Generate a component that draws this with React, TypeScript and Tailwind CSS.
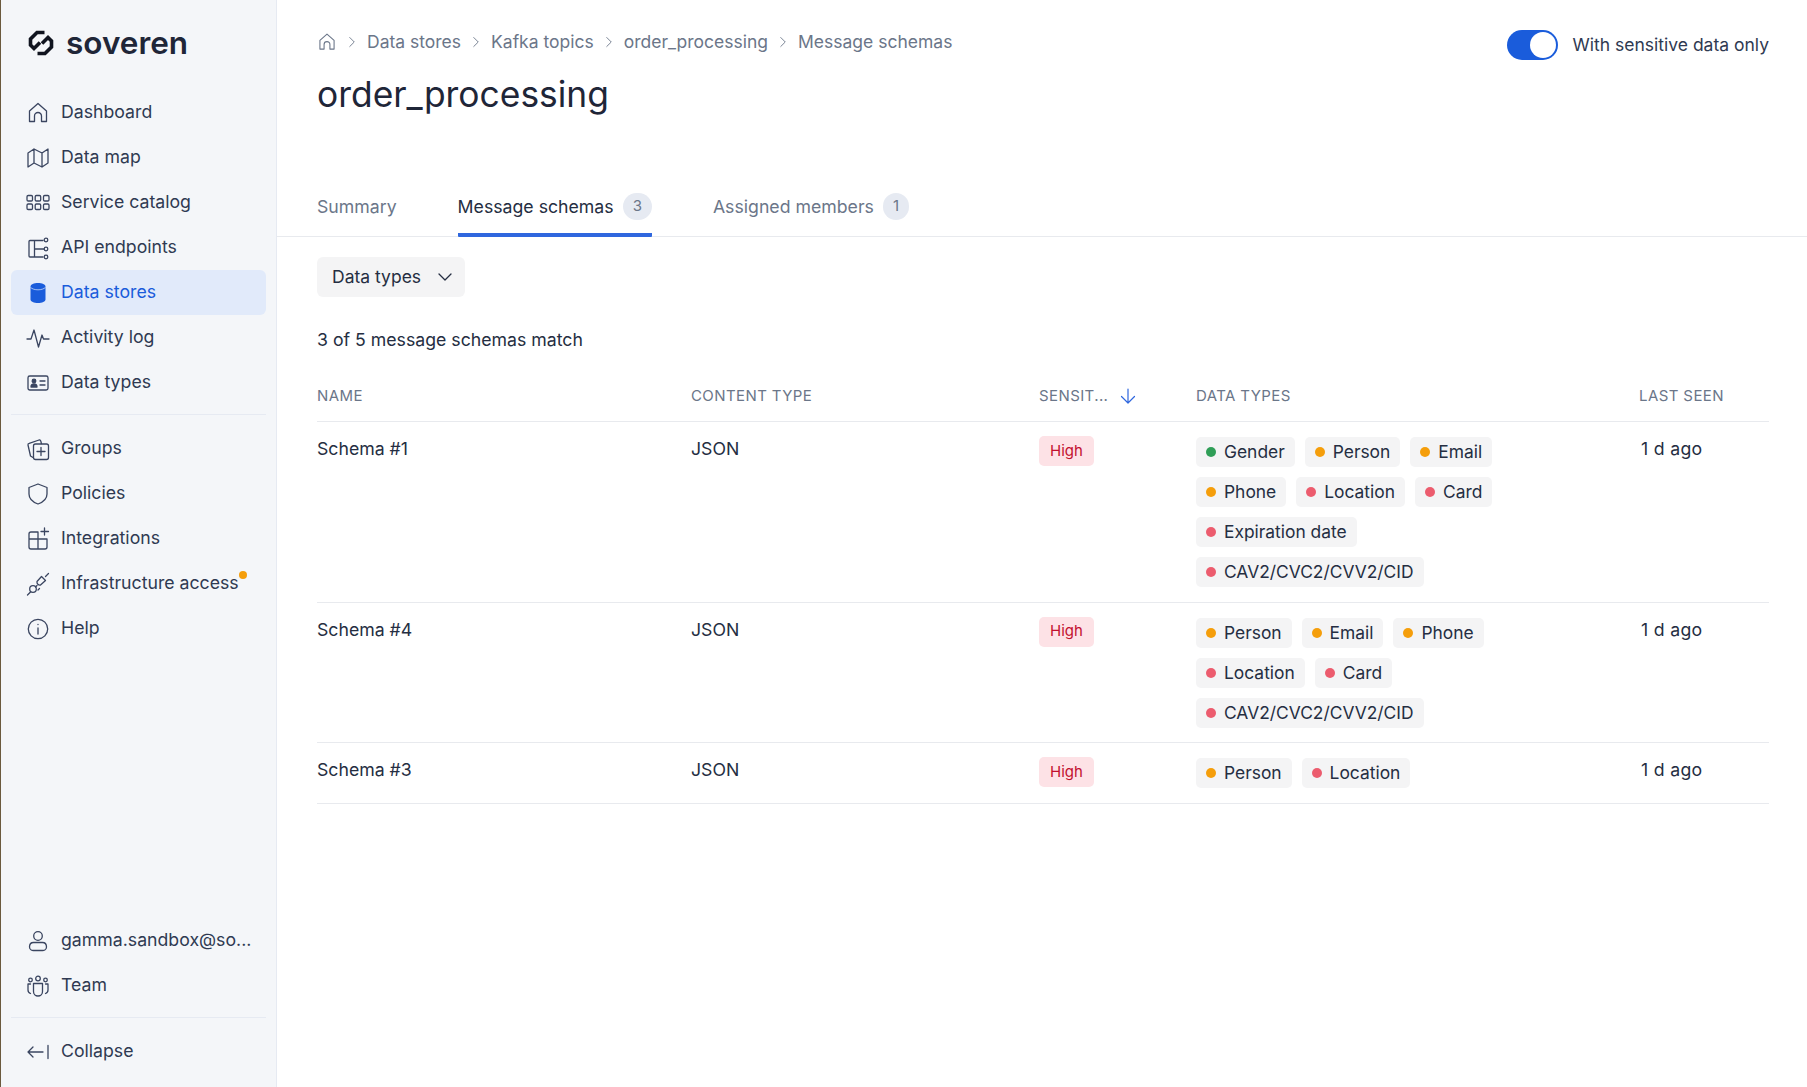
import { ChevronDown, ChevronRight } from 'lucide-react';
import type { ReactNode } from 'react';

const stroke = { fill: 'none', stroke: 'currentColor', strokeWidth: 1.3, strokeLinecap: 'round', strokeLinejoin: 'round' } as const;

function Icon({ children }: { children: ReactNode }) {
  return (
    <svg width="24" height="24" viewBox="0 0 24 24" {...stroke} className="shrink-0">
      {children}
    </svg>
  );
}

const icons: Record<string, ReactNode> = {
  home: <path d="M3.500 20.500V10L12 2.500l8.500 7.500v10.500h-5V15a3.500 3.500 0 0 0-7 0v5.500z" />,
  map: <path d="M2 21V7l6-4 8 4 6-4v14l-6 4-8-4zM8 3v14M16 7v14" />,
  catalog: (
    <>
      <rect x="1" y="4.500" width="5.500" height="5.500" rx="1.200" />
      <rect x="9.200" y="4.500" width="5.500" height="5.500" rx="1.200" />
      <rect x="17.500" y="4.500" width="5.500" height="5.500" rx="1.200" />
      <rect x="1" y="13" width="5.500" height="5.500" rx="1.200" />
      <rect x="9.200" y="13" width="5.500" height="5.500" rx="1.200" />
      <rect x="17.500" y="13" width="5.500" height="5.500" rx="1.200" />
    </>
  ),
  api: (
    <>
      <path d="M17 4.500H4a1 1 0 0 0-1 1V20a1 1 0 0 0 1 1h13M8.500 4.500V21M8.500 13H18" />
      <circle cx="20" cy="4" r="1.800" />
      <circle cx="20" cy="13" r="1.800" />
      <circle cx="20" cy="21" r="1.800" />
    </>
  ),
  activity: <path d="M1 13h4l3-9 4.500 17 3.500-12 1.500 4H23" />,
  types: (
    <>
      <rect x="2" y="5" width="20" height="14" rx="1.800" />
      <circle cx="8" cy="10" r="1.800" fill="currentColor" />
      <path d="M5 16c0-4 6-4 6 0z" fill="currentColor" />
      <path d="M14 10h5M14 14h5" />
    </>
  ),
  groups: (
    <>
      <path d="M7 20.500 4.500 19 2 8a1.500 1.500 0 0 1 1.200-1.700L13 3a1.500 1.500 0 0 1 1.800 1.100l.6 2.400" />
      <rect x="7.500" y="7" width="15" height="15.500" rx="2" />
      <path d="M15 10.500v8M11 14.500h8" />
    </>
  ),
  shield: <path d="M12 2 21 5.500V12c0 5-3.500 8-9 10C6.500 20 3 17 3 12V5.500z" />,
  integrations: (
    <>
      <path d="M12 5H5a2 2 0 0 0-2 2v13a2 2 0 0 0 2 2h14a2 2 0 0 0 2-2v-8H3M12 5v17M12 12h9" />
      <path d="M18.500 1v7M15 4.500h7.500" />
    </>
  ),
  plug: (
    <>
      <path d="M1.500 23 4.500 20M19.500 4.500 22.500 1.500M9.500 15 11 13.500M12 18l1.500-1.500" />
      <circle cx="7" cy="17" r="3.300" />
      <path d="M11 9.500 15.500 4.500l4 4-5 4.500a3 3 0 0 1-3.500-3.500z" />
    </>
  ),
  info: (
    <>
      <circle cx="12" cy="12" r="9.700" />
      <path d="M12 11v6M12 7.300v.3" />
    </>
  ),
  user: (
    <>
      <circle cx="12" cy="7" r="4.300" />
      <path d="M3.500 18c0-3 2-4.500 4-4.500h9c2 0 4 1.500 4 4.500 0 2.500-2.500 3.500-4 3.500h-9c-1.500 0-4-1-4-3.500z" />
    </>
  ),
  team: (
    <>
      <circle cx="12" cy="4.500" r="2.300" />
      <circle cx="4.500" cy="6" r="1.800" />
      <circle cx="19.500" cy="6" r="1.800" />
      <path d="M7.500 9.500h9v8c0 2.500-2 4.500-4.500 4.500s-4.500-2-4.500-4.500z" />
      <path d="M4.500 10H2v6c0 2 1 3 2.500 3.500M19.500 10H22v6c0 2-1 3-2.500 3.500" />
    </>
  ),
  collapse: <path d="M2 12h15M2 12l5-5M2 12l5 5M22 5.500v13" />,
};

function DatabaseIcon() {
  return (
    <svg width="24" height="24" viewBox="0 0 24 24" className="shrink-0">
      <path
        d="M4.500 5.500C4.500 3.500 8 2 12 2s7.500 1.500 7.500 3.500v13c0 2-3.500 3.500-7.500 3.500s-7.500-1.500-7.500-3.500z"
        fill="#1a5cdb"
      />
      <path d="M4.500 6.300C6 8 9 8.800 12 8.800s6-.8 7.500-2.500" fill="none" stroke="#e1eafa" strokeWidth="0.700" />
    </svg>
  );
}

function NavItem({ icon, label, active, dot }: { icon?: string; label: string; active?: boolean; dot?: boolean }) {
  return (
    <div
      className={`h-[45px] flex items-center gap-[11px] pl-[15px] rounded-[6px] text-[17.700px] ${
        active ? 'bg-[#e1eafa] text-[#1a5cdb]' : 'text-[#2f3a52]'
      }`}
    >
      <span className={active ? 'text-[#1a5cdb]' : 'text-[#3a4560]'}>
        {active ? <DatabaseIcon /> : <Icon>{icons[icon ?? 'home']}</Icon>}
      </span>
      <span className="relative whitespace-nowrap">
        {label}
        {dot && <span className="absolute right-[-8px] top-[1px] w-[8px] h-[8px] rounded-full bg-[#f59e0b]" />}
      </span>
    </div>
  );
}

function Logo() {
  return (
    <div className="flex items-center gap-[12px] pl-[17px] h-[44px]">
      <svg width="26" height="26" viewBox="0 0 26 26" fill="none" stroke="#10141f" strokeWidth="3.600" strokeLinejoin="miter" className="shrink-0">
        <path d="M16.500 2.500H9L2.500 9V15L6 18.500 12 12.500" />
        <path d="M9.500 23.500H17L23.500 17V11L20 7.500 14 13.500" />
      </svg>
      <span className="text-[31.500px] font-semibold leading-none text-[#1f2638] pb-[1px]">soveren</span>
    </div>
  );
}

function Sidebar() {
  return (
    <aside className="w-[277px] shrink-0 h-full flex flex-col bg-[#f4f6f9] border-l border-l-[#6b5a3e] border-r border-r-[#e6eaf2] px-[10px] pt-[21px] pb-[13px]">
      <Logo />
      <nav className="mt-[25px] flex flex-col">
        <NavItem icon="home" label="Dashboard" />
        <NavItem icon="map" label="Data map" />
        <NavItem icon="catalog" label="Service catalog" />
        <NavItem icon="api" label="API endpoints" />
        <NavItem label="Data stores" active />
        <NavItem icon="activity" label="Activity log" />
        <NavItem icon="types" label="Data types" />
      </nav>
      <div className="mt-[9px] mb-[11px] border-t border-[#e6eaf2]" />
      <nav className="flex flex-col">
        <NavItem icon="groups" label="Groups" />
        <NavItem icon="shield" label="Policies" />
        <NavItem icon="integrations" label="Integrations" />
        <NavItem icon="plug" label="Infrastructure access" dot />
        <NavItem icon="info" label="Help" />
      </nav>
      <div className="mt-auto flex flex-col">
        <NavItem icon="user" label="gamma.sandbox@so..." />
        <NavItem icon="team" label="Team" />
        <div className="mt-[9px] mb-[11px] border-t border-[#e6eaf2]" />
        <NavItem icon="collapse" label="Collapse" />
      </div>
    </aside>
  );
}

function Breadcrumbs() {
  const crumbs = ['Data stores', 'Kafka topics', 'order_processing', 'Message schemas'];
  return (
    <div className="flex items-center text-[17.500px] text-[#6b7689]">
      <svg width="20" height="20" viewBox="0 0 24 24" {...stroke} className="shrink-0 text-[#6b7689]">
        {icons.home}
      </svg>
      {crumbs.map((c) => (
        <span key={c} className="flex items-center">
          <ChevronRight size={18} strokeWidth={1.200} className="mx-[6px] text-[#6b7689]" />
          {c}
        </span>
      ))}
    </div>
  );
}

function Toggle() {
  return (
    <div className="flex items-center gap-[15px] pt-[1px]">
      <div className="w-[51px] h-[30px] rounded-full bg-[#1a5cdb] flex items-center justify-end pr-[2px]">
        <div className="w-[26px] h-[26px] rounded-full bg-white" />
      </div>
      <span className="text-[17.500px] text-[#2f3a52]">With sensitive data only</span>
    </div>
  );
}

function Tab({ label, count, active }: { label: string; count?: number; active?: boolean }) {
  return (
    <div
      className={`h-[51px] flex items-start gap-[9px] pt-[7px] border-b-[4px] rounded-b-[1px] ${
        active ? 'border-[#2f67de] text-[#252e42]' : 'border-transparent text-[#6b7689]'
      }`}
    >
      <span className="text-[17.700px] leading-[27px]">{label}</span>
      {count !== undefined && (
        <span className="px-[10px] h-[27px] rounded-full bg-[#e6eaf2] text-[#6b7689] text-[15px] flex items-center justify-center">
          {count}
        </span>
      )}
    </div>
  );
}

const GREEN = 'bg-[#2f9e57]';
const ORANGE = 'bg-[#f59e0b]';
const RED = 'bg-[#ec5c6e]';

function Chip({ label, dot }: { label: string; dot: string }) {
  return (
    <span className="h-[30px] flex items-center gap-[8px] px-[10px] rounded-[5px] bg-[#f4f4f5] text-[17.400px] text-[#252e42] whitespace-nowrap">
      <span className={`w-[10px] h-[10px] rounded-full ${dot}`} />
      {label}
    </span>
  );
}

const schemas = [
  {
    name: 'Schema #1',
    chips: [
      ['Gender', GREEN],
      ['Person', ORANGE],
      ['Email', ORANGE],
      ['Phone', ORANGE],
      ['Location', RED],
      ['Card', RED],
      ['Expiration date', RED],
      ['CAV2/CVC2/CVV2/CID', RED],
    ],
  },
  {
    name: 'Schema #4',
    chips: [
      ['Person', ORANGE],
      ['Email', ORANGE],
      ['Phone', ORANGE],
      ['Location', RED],
      ['Card', RED],
      ['CAV2/CVC2/CVV2/CID', RED],
    ],
  },
  {
    name: 'Schema #3',
    chips: [
      ['Person', ORANGE],
      ['Location', RED],
    ],
  },
];

const tableCols = 'grid grid-cols-[374px_348px_157px_443px_130px]';

function SchemaTable() {
  return (
    <div className="mt-[19px] ml-[40px] mr-[38px]">
      <div className={`${tableCols} h-[51px] items-center border-b border-[#e8eaee] text-[15px] tracking-[0.4px] text-[#6b7689]`}>
        <div>NAME</div>
        <div>CONTENT TYPE</div>
        <div className="flex items-center gap-[12px]">
          SENSIT...
          <svg width="16" height="18" viewBox="0 0 16 18" fill="none" stroke="#2f67de" strokeWidth="1.200" strokeLinecap="round" strokeLinejoin="round">
            <path d="M8 2v14M1.500 9.500 8 16l6.500-6.500" />
          </svg>
        </div>
        <div>DATA TYPES</div>
        <div>LAST SEEN</div>
      </div>
      {schemas.map((s) => (
        <div key={s.name} className={`${tableCols} pt-[15px] pb-[14.600px] border-b border-[#e8eaee] text-[17.700px] text-[#252e42]`}>
          <div className="leading-[24px]">{s.name}</div>
          <div className="leading-[24px]">JSON</div>
          <div className="-mt-px">
            <span className="inline-flex h-[30px] items-center px-[11px] rounded-[5px] bg-[#fde2e6] text-[#c2102e] text-[15px]">High</span>
          </div>
          <div className="flex flex-wrap gap-[10px] pr-[130px]">
            {s.chips.map(([label, dot]) => (
              <Chip key={label} label={label} dot={dot} />
            ))}
          </div>
          <div className="leading-[24px] pl-[2px] tracking-[0.3px]">1 d ago</div>
        </div>
      ))}
    </div>
  );
}

export default function App() {
  return (
    <div className="h-[1087px] w-[1807px] flex overflow-hidden bg-white font-['Inter',sans-serif]">
      <Sidebar />
      <main className="flex-1 min-w-0">
        <div className="h-[186px] pl-[40px] pr-[38px] pt-[29px] flex justify-between items-start">
          <div>
            <Breadcrumbs />
            <h1 className="mt-[18px] text-[35.400px] leading-[44px] text-[#1f2638]">order_processing</h1>
          </div>
          <Toggle />
        </div>
        <div className="h-[51px] pl-[40px] flex gap-[61px] border-b border-[#e8eaee]">
          <Tab label="Summary" />
          <Tab label="Message schemas" count={3} active />
          <Tab label="Assigned members" count={1} />
        </div>
        <div className="mt-[20px] ml-[40px]">
          <button className="h-[40px] pl-[15px] pr-[8px] flex items-center gap-[12px] rounded-[6px] bg-[#f4f4f5] text-[17.500px] text-[#252e42]">
            Data types
            <ChevronDown size={24} strokeWidth={1.300} />
          </button>
        </div>
        <div className="mt-[31px] ml-[40px] text-[17.700px] leading-[24px] text-[#252e42]">3 of 5 message schemas match</div>
        <SchemaTable />
      </main>
    </div>
  );
}
